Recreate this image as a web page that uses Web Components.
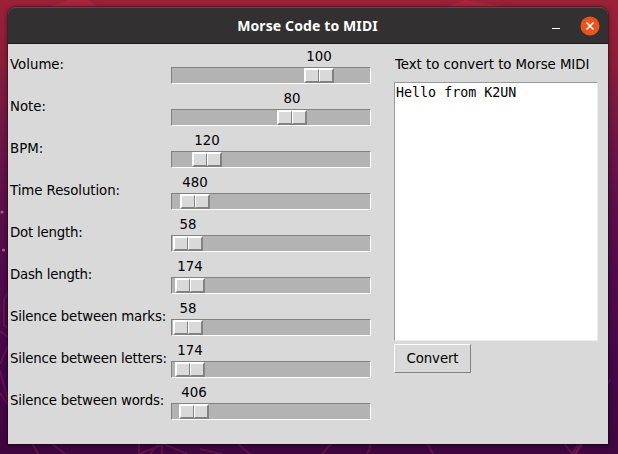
<!DOCTYPE html>
<html lang="en"><head><meta charset="utf-8"><title>Morse Code to MIDI</title>
<style>html,body{margin:0;width:618px;height:454px;overflow:hidden}</style></head>
<body>
<desktop-backdrop>
<app-window heading="Morse Code to MIDI">
<slider-list slot="left">
<scale-row label="Volume:" value="100" offset="132"></scale-row>
<scale-row label="Note:" value="80" offset="105"></scale-row>
<scale-row label="BPM:" value="120" offset="20"></scale-row>
<scale-row label="Time Resolution:" value="480" offset="8" tracking="-.06"></scale-row>
<scale-row label="Dot length:" value="58" offset="1" tracking="-.22"></scale-row>
<scale-row label="Dash length:" value="174" offset="3" tracking="-.25"></scale-row>
<scale-row label="Silence between marks:" value="58" offset="1" tracking="-.18"></scale-row>
<scale-row label="Silence between letters:" value="174" offset="3" tracking="-.2"></scale-row>
<scale-row label="Silence between words:" value="406" offset="7" tracking="-.2"></scale-row>
</slider-list>
<message-panel slot="right" label="Text to convert to Morse MIDI" action="Convert">Hello from K2UN</message-panel>
</app-window>
</desktop-backdrop>
<script>
function define(name, render) {
  customElements.define(name, class extends HTMLElement {
    connectedCallback() {
      if (!this.shadowRoot) this.attachShadow({mode: 'open'}).innerHTML = render(this);
    }
  });
}
define('desktop-backdrop', () => `<style>
:host{display:grid;box-sizing:border-box;width:618px;height:454px;padding:7px 10px 10px 8px;position:relative;
background:linear-gradient(180deg,#9b2138 0,#8a1f3a 60px,#711846 125px,#5c1149 200px,#4f0b4c 280px,#45074a 370px,#40063f 454px)}
svg{position:absolute;inset:0}
</style><svg width="618" height="454" fill="none" stroke="#8b235a" stroke-opacity=".4" stroke-width="2">
<path d="M50 7 68 0H88L98 7ZM445 7 465 0 507 7Z" fill="#c33444" fill-opacity=".35" stroke="none"/>
<path d="M8 292 4 300V325L8 328M0 331 8 337M8 346 0 364M0 371 8 400M0 393 8 405"/>
<path d="M32 443 38 454M51 443 65 454M139 443V454M139 454 164 444 187 454M162 443V454M150 454 158 444M200 449 222 454M238 444 250 454M331 444 322 454M370 443Q371 449 367 454M427 443 433 454M564 443 572 454M582 443 576 454" />
<path d="M581 444 573 454" stroke-width="5"/>
<path d="M608 384 610 379"/>
<g fill="#a25f91" stroke="none"><circle cx="2" cy="212" r="1.6"/><circle cx="3.5" cy="250" r="1.6"/></g>
</svg><slot></slot>`);
define('app-window', e => `<style>
:host{display:grid;grid-template-rows:37px 400px;width:600px;position:relative;border-radius:8px 8px 0 0;box-shadow:0 0 0 1px #0003,0 1px 5px 1px #0006;font:13.333px "DejaVu Sans",sans-serif;color:#000}
header{box-sizing:border-box;display:grid;grid-template-columns:1fr auto 1fr;align-items:center;background:#333031;border-top:1px solid #514d4e;border-bottom:1px solid #1e1c1d;border-radius:8px 8px 0 0;color:#fff}
h1{grid-column:2;margin:1px 1px 0 0;font:bold 14px/20px "Noto Sans",sans-serif;letter-spacing:.11px;white-space:nowrap}
nav{display:flex;justify-content:flex-end;gap:26px;padding-right:8px}
main{display:grid;grid-template-columns:386px 214px;background:#d9d9d9}
svg{display:block}
</style><header><h1>${e.getAttribute('heading')}</h1><nav>
<svg width="20" height="20" style="margin-right:-14px" viewBox="0 0 20 20"><path d="M4 12.5h8" stroke="#fff"/></svg>
<svg width="20" height="20" viewBox="0 0 20 20"><circle cx="10" cy="10" r="9.5" fill="#e95420"/><path d="m6.5 6.5 7 7m0-7-7 7" stroke="#fff" stroke-width="1.5"/></svg>
</nav></header><main><slot name="left"></slot><slot name="right"></slot></main>`);
define('slider-list', () => `<style>:host{display:flex;flex-direction:column}</style><slot></slot>`);
define('scale-row', e => `<style>
:host{display:grid;grid-template-columns:163px 200px;height:42px}
label{padding:13px 0 0 2px;line-height:16px;white-space:nowrap;letter-spacing:${e.getAttribute('tracking') || 0}px}
.scale{display:grid;grid-template-rows:23px 17px}
.value{margin-left:${+e.getAttribute('offset') + 1}px;width:30px;display:flex;justify-content:center;padding-top:5px;line-height:16px}
.trough{box-sizing:border-box;background:#b3b3b3;border:1px solid;border-color:#828282 #fff #fff #828282;padding-left:${e.getAttribute('offset')}px}
.thumb{box-sizing:border-box;width:30px;height:15px;display:grid;grid-template-columns:1fr 1fr}
.thumb,.thumb i{border:1px solid;border-color:#fff #828282 #828282 #fff;background:#d9d9d9}
</style><label>${e.getAttribute('label')}</label><div class="scale"><span class="value">${e.getAttribute('value')}</span><div class="trough"><div class="thumb"><i></i><i></i></div></div></div>`);
define('message-panel', e => `<style>
:host{display:grid;grid-template-rows:38px 259px 32px;justify-items:start}
label{padding:13px 0 0 1px;line-height:16px;white-space:nowrap;letter-spacing:-.04px}
.field{box-sizing:border-box;width:204px;background:#fff;border:1px solid;border-color:#999 #ececec #ececec #999;padding:1px;font:13.333px/17px "DejaVu Sans Mono",monospace}
button{box-sizing:border-box;width:77px;height:29px;margin-top:3px;padding:0;background:#d9d9d9;border:1px solid;border-color:#fff #828282 #828282 #fff;font:inherit;letter-spacing:-.1px;color:inherit}
</style><label>${e.getAttribute('label')}</label><div class="field"><slot></slot></div><button>${e.getAttribute('action')}</button>`);
</script></body></html>
